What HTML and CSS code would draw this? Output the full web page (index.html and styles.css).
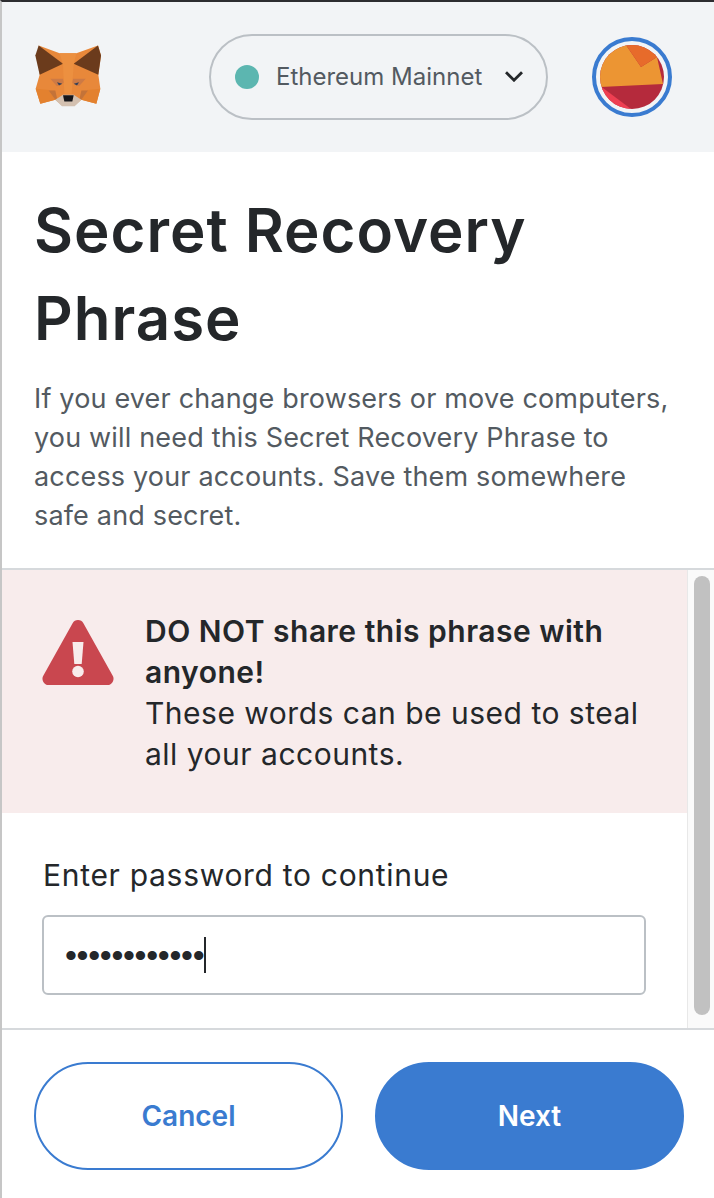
FILE: index.html
```html
<!DOCTYPE html>
<html lang="en">
<head>
    <meta charset="UTF-8">
    <meta name="viewport" content="width=device-width, initial-scale=1.0">
    <title>Secret Recovery Phrase</title>
    <link rel="stylesheet" href="styles.css">
</head>
<body>
    <div class="window">
        <header class="top-bar">
            <svg class="fox" viewBox="100 130 210 200" aria-label="MetaMask">
                <polygon fill="#e8883a" points="117,140 180,163 230,163 295,140 304,170 296,228 302,270 290,315 245,303 225,320 187,320 167,303 122,315 108,270 120,228"/>
                <polygon fill="#6b3b1c" points="117,140 190,195 120,228 107,170"/>
                <polygon fill="#6b3b1c" points="295,140 222,195 296,228 304,170"/>
                <polygon fill="#e3812f" points="108,270 167,275 147,275 167,303 122,315"/>
                <polygon fill="#e3812f" points="302,270 245,275 265,275 245,303 290,315"/>
                <polygon fill="#c47338" points="147,275 167,275 172,298 167,303"/>
                <polygon fill="#c47338" points="265,275 245,275 240,298 245,303"/>
                <polygon fill="#ec9040" points="180,163 230,163 222,197 216,285 194,285 190,197"/>
                <polygon fill="#cd7a45" points="152,240 190,240 192,252 172,262"/>
                <polygon fill="#cd7a45" points="258,240 220,240 218,252 238,262"/>
                <polygon fill="#33405a" points="172,250 188,255 178,260"/>
                <polygon fill="#33405a" points="238,250 222,255 232,260"/>
                <polygon fill="#d3c0b0" points="167,303 190,288 222,288 245,303 225,322 187,322"/>
                <polygon fill="#16161a" points="190,289 222,289 218,308 194,308"/>
            </svg>
            <button class="network-pill">
                <span class="network-dot"></span>
                <span class="network-name">Ethereum Mainnet</span>
                <svg class="chevron" viewBox="0 0 18 11"><path d="M1 1.2 9 9.2l8-8" fill="none" stroke="#24272a" stroke-width="2.8"/></svg>
            </button>
            <div class="avatar">
                <svg class="avatar-pic" viewBox="0 0 64 64">
                    <rect width="64" height="64" fill="#b52a3c"/>
                    <polygon fill="#ee3f52" points="0,42 3,43 31,64 0,64"/>
                    <polygon fill="#ec9533" points="0,0 26,0 41,22 57,12 63,39 0,42"/>
                    <polygon fill="#e76b2b" points="26,0 64,0 64,5 57,12 41,22"/>
                </svg>
            </div>
        </header>

        <section class="intro">
            <h1>Secret Recovery Phrase</h1>
            <p>If you ever change browsers or move computers, you will need this Secret Recovery Phrase to access your accounts. Save them somewhere safe and secret.</p>
        </section>

        <div class="scroll-area">
            <div class="scroll-content">
                <div class="warning">
                    <svg class="warning-icon" viewBox="0 0 72 65">
                        <path fill="#c9474f" d="M30.6 3.2a6.2 6.2 0 0 1 10.8 0l29.2 52.4A6.2 6.2 0 0 1 65.2 65H6.8a6.2 6.2 0 0 1-5.4-9.4z"/>
                        <path fill="#f8ecec" d="M30.5 22h11l-1.8 22h-7.4z"/>
                        <circle fill="#f8ecec" cx="36" cy="51.5" r="5.8"/>
                    </svg>
                    <div class="warning-text">
                        <strong>DO NOT share this phrase with anyone!</strong><br>
                        These words can be used to steal all your accounts.
                    </div>
                </div>
                <div class="password-form">
                    <label class="password-label">Enter password to continue</label>
                    <div class="password-input"><span class="password-dots">••••••••••••</span><span class="caret"></span></div>
                </div>
            </div>
            <div class="scroll-track"><div class="scroll-thumb"></div></div>
        </div>

        <footer class="actions">
            <button class="btn btn-outline">Cancel</button>
            <button class="btn btn-primary">Next</button>
        </footer>
    </div>
</body>
</html>
```

FILE: styles.css
```css
:root {
    --ink: #24272a;
    --muted: #535a61;
    --blue: #3a7bd0;
    --line: #d6d9dc;
    --grey-border: #bbc0c5;
}

* {
    box-sizing: border-box;
    font-family: 'Inter', sans-serif;
}

body {
    margin: 0;
    background: white;
}

.window {
    position: relative;
    height: 1198px;
    border-left: 2px solid #c6c6c6;
    border-top: 2px solid #2d2d30;
    overflow: hidden;
}

/* dark edge of the window behind, top left */
.window::before {
    content: '';
    position: absolute;
    top: 0;
    left: -2px;
    width: 2px;
    height: 70px;
    background: #2d2d30;
}

.top-bar {
    display: flex;
    align-items: center;
    height: 150px;
    padding: 0 42px 0 31px;
    background: #f2f4f6;
}

.fox {
    width: 70px;
    height: 67px;
    margin-top: -3px;
}

.network-pill {
    display: flex;
    align-items: center;
    width: 339px;
    height: 86px;
    margin: -1px 0 0 106px;
    padding: 0 23px 0 24px;
    background: transparent;
    border: 2px solid var(--grey-border);
    border-radius: 43px;
}

.network-dot {
    width: 24px;
    height: 24px;
    border-radius: 50%;
    background: #5cb6b0;
}

.network-name {
    margin-left: 17px;
    font-size: 24px;
    color: var(--muted);
}

.chevron {
    width: 18px;
    height: 11px;
    margin-left: auto;
}

.avatar {
    display: flex;
    align-items: center;
    justify-content: center;
    width: 80px;
    height: 80px;
    margin: 0 0 0 auto;
    border: 4px solid var(--blue);
    border-radius: 50%;
}

.avatar-pic {
    width: 64px;
    height: 64px;
    border-radius: 50%;
}

.intro {
    height: 418px;
    padding: 34px 32px 0 32px;
    border-bottom: 2px solid var(--line);
}

h1 {
    margin: 0 0 17px;
    font-size: 60px;
    font-weight: 600;
    letter-spacing: 1px;
    line-height: 88px;
    color: var(--ink);
}

.intro p {
    margin: 0;
    font-size: 27px;
    letter-spacing: 0.17px;
    line-height: 39px;
    color: var(--muted);
}

.scroll-area {
    display: flex;
    height: 458px;
}

.scroll-content {
    flex: 1;
}

.warning {
    display: flex;
    height: 243px;
    padding: 41px 30px 0 40px;
    background: #f8ecec;
}

.warning-icon {
    flex: none;
    width: 72px;
    height: 65px;
    margin-top: 9px;
}

.warning-text {
    margin-left: 31px;
    font-size: 30px;
    letter-spacing: 0.5px;
    line-height: 41px;
    color: var(--ink);
}

.warning-text strong {
    font-weight: 600;
}

.password-form {
    padding: 42px 41px 0 40px;
}

.password-label {
    display: block;
    margin-left: 1px;
    font-size: 30px;
    letter-spacing: 0.7px;
    line-height: 40px;
    color: var(--ink);
}

.password-input {
    display: flex;
    align-items: center;
    height: 80px;
    margin-top: 20px;
    padding-left: 21px;
    border: 2px solid var(--grey-border);
    border-radius: 6px;
}

.password-dots {
    font-family: 'Liberation Sans', sans-serif;
    font-size: 34px;
    letter-spacing: -0.3px;
    color: var(--ink);
}

.caret {
    width: 2px;
    height: 36px;
    background: var(--ink);
}

.scroll-track {
    flex: none;
    width: 27px;
    padding: 6px 4px 13px 6px;
    background: #fafafa;
    border-left: 1px solid #e8e8e8;
}

.scroll-thumb {
    height: 100%;
    border-radius: 8px;
    background: #c1c1c1;
}

.actions {
    display: flex;
    gap: 32px;
    padding: 32px 30px 0 32px;
    border-top: 2px solid var(--line);
}

.btn {
    flex: 1;
    height: 108px;
    border-radius: 54px;
    border: 2px solid var(--blue);
    font-size: 28px;
    font-weight: 600;
    cursor: pointer;
}

.btn-outline {
    background: white;
    color: var(--blue);
}

.btn-primary {
    background: var(--blue);
    color: white;
}
```
